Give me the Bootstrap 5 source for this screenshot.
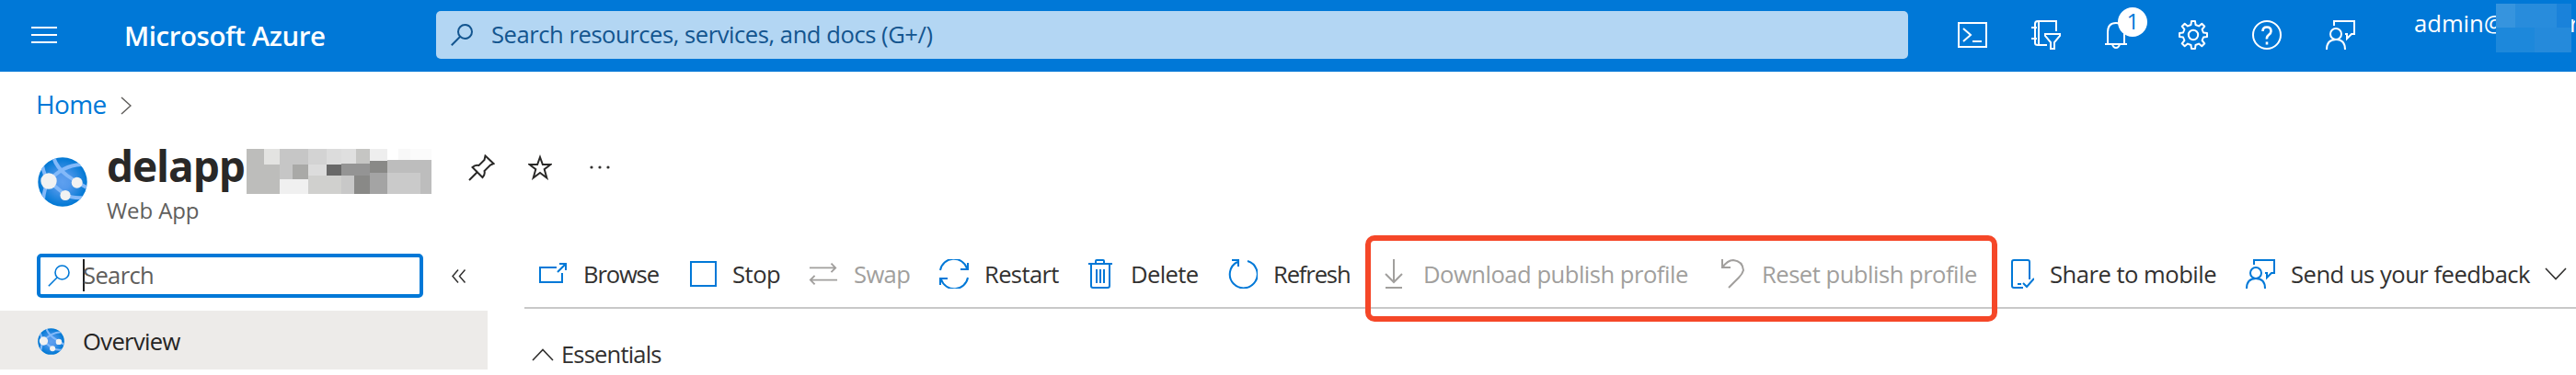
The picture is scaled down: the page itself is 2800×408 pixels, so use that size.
<!DOCTYPE html>
<html lang="en">
<head>
<meta charset="utf-8">
<title>Microsoft Azure</title>
<link href="https://cdn.jsdelivr.net/npm/bootstrap@5.3.0/dist/css/bootstrap.min.css" rel="stylesheet">
<style>
body{font-family:"Open Sans","Noto Sans",sans-serif;font-size:25.6px;line-height:32px;letter-spacing:-.65px;color:#323130;height:408px;overflow:hidden;background:#fff}
svg{display:block;flex:none;fill:none;stroke:currentColor;stroke-width:2}
span{white-space:nowrap}
.topbar{height:78px;background:#0078d7;color:#fff;padding:0 0 2px 34px}
.topbar>*{flex:none}
.brand{font-size:29.5px;font-weight:600;letter-spacing:-.45px;margin-left:73px;width:339px;padding-top:1px}
.searchbar{width:1600px;height:52px;background:#b3d6f3;color:#13558f;border-radius:5px;padding-left:16px;gap:20px;margin-right:54px;letter-spacing:-.46px}
.filter span{padding-bottom:1px}
.tools{gap:48px;width:496px}
.count{position:absolute;top:-14px;left:14px;width:32px;height:32px;border-radius:50%;background:#fff;color:#0078d7;font-size:24px;line-height:30px;text-align:center}
.account{width:175px;height:76px;padding-top:10px;letter-spacing:0}
.account .who{width:169px}
.account .mask{position:absolute;left:89px;top:4px}
.crumb{height:70px;margin-bottom:6px;padding-left:39px;font-size:28px;color:#0078d7;gap:15px}
.crumb svg{color:#605e5c;stroke-width:1.5;margin-top:4px}
.head{height:122px;padding-left:41px;gap:21px}
.head-icon{margin-top:17px}
.title{font-size:46px;font-weight:700;line-height:50px;letter-spacing:-1.1px;color:#292827;margin-top:1px}
.title .name{width:152px}
.redact{margin:7px 40px 0 0}
.pin{margin:13px 36px 0 0}
.star{margin:13px 40px 0 0}
.dots{margin-top:24px}
.kind{font-size:24px;line-height:30px;letter-spacing:-.1px;color:#605e5c;margin-top:3px}
.side{width:530px}
.filter{width:420px;height:48px;border:4px solid #0078d7;border-radius:5px;color:#605e5c;padding-left:8px;gap:14px;margin-left:40px}
.filter svg{color:#0078d7;stroke-width:1.6}
.caret{width:2px;height:35px;background:#222;margin:0 -16px 2px 0}
.fold{margin-left:31px;stroke-width:1.5}
.nav-row{height:64px;margin-top:14px;background:#edebe9;padding:2px 0 0 41px;gap:20px;color:#252423}
.nav-row span,.cmd span,.ess span{padding-top:1px}
.content{margin-left:40px;width:2230px}
.cmds{display:grid;grid-template-columns:162px 132px 141px 160px 154px 164px 368px 313px 262px 325px auto;height:60px;padding-left:15px;border-bottom:2px solid #c8c8c8;position:relative}
.cmd{height:44px;gap:17px}
.cmd svg{color:#0078d7}
.cmd.dark svg{color:#323130;stroke-width:1.6}
.cmd.off,.cmd.off svg{color:#a19f9d}
.tight{letter-spacing:-1.15px}
.wide{letter-spacing:-.5px}
.marker{position:absolute;left:914px;top:-20px;width:687px;height:94px;border:6px solid #f54728;border-radius:10px}
.ess{margin-top:33px;padding-left:8px;gap:8px;letter-spacing:-.85px}
.ess svg{stroke-width:1.6}
</style>
</head>
<body>
<svg width="0" height="0" class="position-absolute">
 <defs>
  <radialGradient id="g"><stop offset="0" stop-color="#5ea0ef"/><stop offset=".3" stop-color="#5499ec"/><stop offset="1" stop-color="#0078d4"/></radialGradient>
  <clipPath id="c"><circle cx="27" cy="27" r="26.7"/></clipPath>
  <symbol id="world" viewBox="0 0 54 54"><g stroke="none"><circle cx="27" cy="27" r="26.7" fill="url(#g)"/></g>
   <g clip-path="url(#c)" stroke="#83b9f9" stroke-width="4" fill="none"><path d="M17 0Q21 12 32 20T55 34M47 8Q27 9 12 26M5 9Q7 20 12 26Q7 34 6 46M12 26L30 41Q38 45 50 44"/></g>
   <g stroke="none" fill="#f2f2f2"><circle cx="12" cy="26" r="8.7"/><circle cx="42.7" cy="27.7" r="6"/><circle cx="30" cy="41.5" r="5.6"/></g></symbol>
  <symbol id="mag" viewBox="0 0 24 24"><circle cx="15.500" cy="8.500" r="7.500"/><path d="M10 14L.8 23.300"/></symbol>
  <symbol id="fb" viewBox="0 0 32 32"><circle cx="11" cy="15" r="6"/><path d="M1 32Q1 21 11 21T21 32M9 6V1H31V15H28L23 20V15H21"/></symbol>
 </defs>
</svg>
<header class="topbar d-flex align-items-center">
 <svg width="28" height="20"><path d="M0 2H28M0 10H28M0 18H28"/></svg>
 <span class="brand">Microsoft Azure</span>
 <div class="searchbar d-flex align-items-center"><svg width="24" height="24"><use href="#mag"/></svg><span>Search resources, services, and docs (G+/)</span></div>
 <div class="tools d-flex align-items-center">
  <svg width="32" height="32"><path d="M1 3H31V29H1ZM6 9L14 16L6 23M16 23H26"/></svg>
  <svg width="32" height="32"><path d="M27 12V1H7Q4 1 4 4V25Q4 27 7 27H17M8 1V27M0 8H6M0 20H6M15 15H31V17L25 24V31H21V24L15 17Z"/></svg>
  <div class="position-relative"><svg width="32" height="32"><path d="M0 26H24M3 26V13Q3 3 12 3T21 13V26M8 26Q9 30 12 30T16 26"/></svg><span class="count">1</span></div>
  <svg width="32" height="32"><circle cx="16" cy="16" r="5.200"/><path stroke-linejoin="round" d="M13.500 5L14 1H18L18.500 5L22 6.400L25.300 3.700L28.300 6.700L25.600 10L27 13.500L31 14V18L27 18.500L25.600 22L28.300 25.300L25.300 28.300L22 25.600L18.500 27L18 31H14L13.500 27L10 25.600L6.700 28.300L3.700 25.300L6.400 22L5 18.500L1 18V14L5 13.500L6.400 10L3.700 6.700L6.700 3.700L10 6.400Z"/></svg>
  <svg width="32" height="32"><circle cx="16" cy="16" r="15"/><path stroke-width="2.600" d="M11.500 12Q11.500 7.500 16 7.500T20.500 12Q20.500 14 18 16T16 20.500M16 23.500V26.500"/></svg>
  <svg width="32" height="32"><use href="#fb"/></svg>
 </div>
 <div class="account position-relative overflow-hidden d-flex"><span class="who flex-shrink-0">admin@</span><span>r</span>
  <svg class="mask" width="82" height="53" shape-rendering="crispEdges"><g stroke="none"><path fill="#1d88db" d="M0 0H82V53H0Z"/><path fill="#3694de" d="M0 0H21V26H0Z"/><path fill="#288cdc" d="M21 0H66V26H21Z"/><path fill="#1a82da" d="M66 0H82V26H66Z"/><path fill="#258adb" d="M42 26H82V53H42Z"/></g></svg>
 </div>
</header>
<nav class="crumb d-flex align-items-center"><span>Home</span><svg width="12" height="20"><path d="M1 1L11 10L1 19"/></svg></nav>
<div class="head d-flex">
 <svg class="head-icon" width="54" height="54"><use href="#world"/></svg>
 <div>
  <div class="title d-flex align-items-start"><span class="name">delapp</span>
   <svg class="redact" width="201" height="49" shape-rendering="crispEdges"><g stroke="none">
    <path fill="#bdbdbb" d="M0 0H36V49H0Z"/><path fill="#e3e3e1" d="M19 0H36V17H19Z"/>
    <path fill="#c6c6c6" d="M36 0H67V33H36Z"/><path fill="#a9a9a7" d="M50 17H67V33H50Z"/><path fill="#f0f0f0" d="M36 33H67V49H36Z"/>
    <path fill="#d3d3d3" d="M67 0H87V17H67Z"/><path fill="#dcdcdc" d="M67 17H87V29H67ZM87 0H103V17H87Z"/><path fill="#d0d0ce" d="M67 29H103V49H67Z"/>
    <path fill="#686868" d="M87 17H103V29H87Z"/><path fill="#dfdfdf" d="M103 0H119V16H103Z"/><path fill="#c5c5c3" d="M119 0H134V16H119Z"/>
    <path fill="#949494" d="M103 16H134V29H103Z"/><path fill="#c8c8c8" d="M103 29H117V49H103Z"/><path fill="#898987" d="M117 29H134V49H117ZM134 13H153V26H134Z"/>
    <path fill="#eee" d="M134 0H153V13H134Z"/><path fill="#a4a4a4" d="M134 26H153V49H134Z"/><path fill="#f8f8f8" d="M165 0H178V12H165Z"/><path fill="#fbfbfb" d="M178 0H201V12H178Z"/>
    <path fill="#bdbdbd" d="M153 12H201V49H153Z"/><path fill="#cacaca" d="M153 26H189V49H153Z"/></g></svg>
   <svg class="pin" width="29" height="29"><path d="M1 28L10.500 18.500M18.500 1.500L27.500 10L24 11.500L17.500 18Q18.500 22 15.500 25L4.500 14Q7.500 11 11.500 12L17.500 6Z"/></svg>
   <svg class="star" width="26" height="28"><path d="M13 3L15.900 11H24.500L17.700 16.200L20.300 25.500L13 20L5.700 25.500L8.300 16.200L1.500 11H10.100Z"/></svg>
   <svg class="dots" width="24" height="6"><g fill="#323130" stroke="none"><circle cx="3" cy="3" r="1.600"/><circle cx="12" cy="3" r="1.600"/><circle cx="21" cy="3" r="1.600"/></g></svg>
  </div>
  <div class="kind"><span>Web App</span></div>
 </div>
</div>
<div class="d-flex">
 <aside class="side flex-shrink-0">
  <div class="d-flex align-items-center"><div class="filter d-flex align-items-center"><svg width="24" height="24"><use href="#mag"/></svg><i class="caret"></i><span>Search</span></div>
   <svg class="fold" width="16" height="15"><path d="M7 .5L1 7.500L7 14.500M14.500 .5L8.500 7.500L14.500 14.500"/></svg></div>
  <div class="nav-row d-flex align-items-center"><svg width="29" height="29"><use href="#world"/></svg><span>Overview</span></div>
 </aside>
 <main class="content">
  <div class="cmds">
   <div class="cmd tight d-flex align-items-center"><svg width="32" height="32"><path d="M20 9H2V25H26V15M21 14L30 5M23 5H30V12"/></svg><span>Browse</span></div>
   <div class="cmd wide d-flex align-items-center"><svg width="32" height="32"><path d="M4 3H31V29H4Z"/></svg><span>Stop</span></div>
   <div class="cmd off d-flex align-items-center"><svg width="32" height="32" viewBox="0 0 34 32"><path d="M1 9H31M26 4L31 9L26 14M33 23H3M7 18L2 23L7 28"/></svg><span>Swap</span></div>
   <div class="cmd d-flex align-items-center"><svg width="33" height="32"><path d="M2 12A15 15 0 0 1 31 10M24 11H32V4M32 20A15 15 0 0 1 3 22M10 21H2V28"/></svg><span>Restart</span></div>
   <div class="cmd d-flex align-items-center"><svg width="32" height="32"><path d="M3 5H29M11 5V2Q11 1 12 1H19Q20 1 20 2V5M6 5V29Q6 31 8 31H24Q26 31 26 29V5M12 11V26M16 11V26M20 11V26"/></svg><span>Delete</span></div>
   <div class="cmd tight d-flex align-items-center"><svg width="33" height="32"><path d="M11 3A15 15 0 1 0 22 2M5 1H12V8"/></svg><span>Refresh</span></div>
   <div class="cmd off wide d-flex align-items-center"><svg width="32" height="32"><path d="M17 0V25M8 16L17 25L26 16M8 31H26"/></svg><span>Download publish profile</span></div>
   <div class="cmd off wide d-flex align-items-center"><svg width="32" height="32"><path d="M6 0V9H15M6 9Q12 1 18 1Q28 2 29 12Q28 16 24 20L13 31"/></svg><span>Reset publish profile</span></div>
   <div class="cmd wide d-flex align-items-center"><svg width="32" height="32"><path d="M20 31H10Q8 31 8 29V3Q8 1 10 1H25Q27 1 27 3V22M14 27H18M20 26L24 30L32 21"/></svg><span>Share to mobile</span></div>
   <div class="cmd wide d-flex align-items-center"><svg width="32" height="32"><use href="#fb"/></svg><span>Send us your feedback</span></div>
   <div class="cmd dark d-flex align-items-center"><svg width="24" height="14"><path d="M1 1L12 12.500L23 1"/></svg></div>
   <div class="marker"></div>
  </div>
  <div class="ess d-flex align-items-center"><svg width="24" height="14"><path d="M1 13L12 1.500L23 13"/></svg><span>Essentials</span></div>
 </main>
</div>
<script src="https://cdn.jsdelivr.net/npm/bootstrap@5.3.0/dist/js/bootstrap.bundle.min.js"></script>
</body>
</html>
